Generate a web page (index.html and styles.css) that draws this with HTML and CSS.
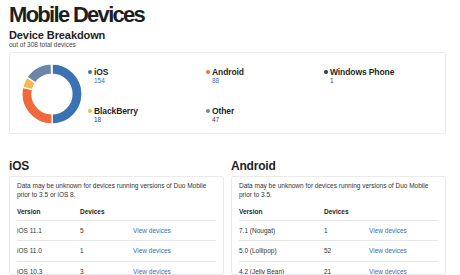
FILE: index.html
```html
<!DOCTYPE html>
<html lang="en">
<head>
    <meta charset="UTF-8">
    <title>Mobile Devices</title>
    <link rel="stylesheet" href="styles.css">
</head>
<body>

    <h1 class="page-title">Mobile Devices</h1>
    <h2 class="section-title">Device Breakdown</h2>
    <p class="subtitle">out of 308 total devices</p>

    <div class="card breakdown">
        <svg class="donut" width="62" height="62" viewBox="0 0 62 62">
            <path class="seg-ios" d="M31 1 A30 30 0 0 1 31 61 L31 51 A20 20 0 0 0 31 11 Z"/>
            <path class="seg-android" d="M31 61 A30 30 0 0 1 1.75 24.32 L11.5 26.55 A20 20 0 0 0 31 51 Z"/>
            <path class="seg-blackberry" d="M1.75 24.32 A30 30 0 0 1 6.1 14.27 L14.4 19.85 A20 20 0 0 0 11.5 26.55 Z"/>
            <path class="seg-other" d="M6.1 14.27 A30 30 0 0 1 30.39 1.01 L30.59 11 A20 20 0 0 0 14.4 19.85 Z"/>
            <path class="seg-windows" d="M30.39 1.01 A30 30 0 0 1 31 1 L31 11 A20 20 0 0 0 30.59 11 Z"/>
        </svg>

        <ul class="legend">
            <li class="legend-item">
                <span class="dot dot-ios"></span>
                <div class="legend-text">
                    <strong>iOS</strong>
                    <span class="count count-link">154</span>
                </div>
            </li>
            <li class="legend-item">
                <span class="dot dot-android"></span>
                <div class="legend-text">
                    <strong>Android</strong>
                    <span class="count count-link">88</span>
                </div>
            </li>
            <li class="legend-item">
                <span class="dot dot-windows"></span>
                <div class="legend-text">
                    <strong>Windows Phone</strong>
                    <span class="count">1</span>
                </div>
            </li>
            <li class="legend-item">
                <span class="dot dot-blackberry"></span>
                <div class="legend-text">
                    <strong>BlackBerry</strong>
                    <span class="count">18</span>
                </div>
            </li>
            <li class="legend-item">
                <span class="dot dot-other"></span>
                <div class="legend-text">
                    <strong>Other</strong>
                    <span class="count">47</span>
                </div>
            </li>
        </ul>
    </div>

    <div class="platforms">
        <section class="platform">
            <h2 class="platform-title">iOS</h2>
            <div class="card platform-card">
                <p class="note">Data may be unknown for devices running versions of Duo Mobile prior to 3.5 or iOS 8.</p>
                <table class="versions versions-ios">
                    <colgroup>
                        <col class="col-version">
                        <col class="col-devices">
                        <col>
                    </colgroup>
                    <thead>
                        <tr><th>Version</th><th>Devices</th><th></th></tr>
                    </thead>
                    <tbody>
                        <tr><td>iOS 11.1</td><td>5</td><td><a href="#">View devices</a></td></tr>
                        <tr><td>iOS 11.0</td><td>1</td><td><a href="#">View devices</a></td></tr>
                        <tr><td>iOS 10.3</td><td>3</td><td><a href="#">View devices</a></td></tr>
                    </tbody>
                </table>
            </div>
        </section>

        <section class="platform">
            <h2 class="platform-title">Android</h2>
            <div class="card platform-card">
                <p class="note">Data may be unknown for devices running versions of Duo Mobile prior to 3.5.</p>
                <table class="versions versions-android">
                    <colgroup>
                        <col class="col-version">
                        <col class="col-devices">
                        <col>
                    </colgroup>
                    <thead>
                        <tr><th>Version</th><th>Devices</th><th></th></tr>
                    </thead>
                    <tbody>
                        <tr><td>7.1 (Nougat)</td><td>1</td><td><a href="#">View devices</a></td></tr>
                        <tr><td>5.0 (Lollipop)</td><td>52</td><td><a href="#">View devices</a></td></tr>
                        <tr><td>4.2 (Jelly Bean)</td><td>21</td><td><a href="#">View devices</a></td></tr>
                    </tbody>
                </table>
            </div>
        </section>
    </div>

</body>
</html>
```

FILE: styles.css
```css
/* --- Base --- */
:root {
    --text: #1f1f1f;
    --muted: #444;
    --border: #ebebeb;
    --line: #e6e6e6;
    --link: #3b6db3;
    --ios: #3b72b4;
    --android: #f0693a;
    --blackberry: #f6b84b;
    --other: #6b86a6;
    --windows: #22395a;
}

* {
    margin: 0;
    padding: 0;
    box-sizing: border-box;
}

body {
    font-family: "Liberation Sans", Arial, sans-serif;
    color: var(--text);
    background: #fff;
    padding: 3px 14px 0 9px;
    overflow: hidden;
}

.page-title {
    font-size: 22px;
    line-height: 24px;
    font-weight: 700;
    letter-spacing: -1.7px;
}

.section-title {
    font-size: 11px;
    line-height: 12px;
    font-weight: 700;
    margin-top: 2px;
    letter-spacing: -0.1px;
}

.subtitle {
    font-size: 6.5px;
    line-height: 7px;
    color: var(--muted);
}

.card {
    border: 1px solid var(--border);
    border-radius: 2px;
    background: #fff;
}

/* --- Breakdown card --- */
.breakdown {
    margin-top: 4px;
    display: flex;
    align-items: center;
    padding: 10px 11px 8px;
}

.donut {
    flex-shrink: 0;
}

.donut path {
    stroke: #fff;
    stroke-width: 1.2;
}

.seg-ios { fill: var(--ios); }
.seg-android { fill: var(--android); }
.seg-blackberry { fill: var(--blackberry); }
.seg-other { fill: var(--other); }
.seg-windows { fill: var(--windows); }

.legend {
    list-style: none;
    flex: 1;
    display: grid;
    grid-template-columns: 118px 118px 1fr;
    row-gap: 21px;
    margin-left: 5px;
    margin-top: 2px;
}

.legend-item {
    display: flex;
    align-items: flex-start;
}

.dot {
    width: 4px;
    height: 4px;
    border-radius: 50%;
    margin: 3.5px 2px 0 0;
    flex-shrink: 0;
}

.dot-ios { background: var(--ios); }
.dot-android { background: var(--android); }
.dot-blackberry { background: var(--blackberry); }
.dot-other { background: var(--other); }
.dot-windows { background: var(--windows); }

.legend-text strong {
    display: block;
    font-size: 8.5px;
    line-height: 10px;
    letter-spacing: -0.1px;
}

.count {
    display: block;
    font-size: 6.5px;
    line-height: 8px;
    color: var(--muted);
}

.count-link {
    color: var(--link);
}

/* --- Platform cards --- */
.platforms {
    display: grid;
    grid-template-columns: 1fr 1fr;
    column-gap: 7px;
    margin-top: 25px;
}

.platform-title {
    font-size: 12px;
    line-height: 14px;
    font-weight: 700;
    letter-spacing: -0.2px;
    margin-bottom: 3px;
}

.platform-card {
    padding: 4px 7px 0;
    height: 99px;
    overflow: hidden;
}

.note {
    font-size: 6.5px;
    line-height: 9px;
    color: #333;
    margin-bottom: 5px;
}

.versions {
    width: 100%;
    border-collapse: collapse;
    font-size: 6.5px;
    table-layout: fixed;
}

.versions th {
    text-align: left;
    font-weight: 700;
    height: 16px;
    vertical-align: middle;
    border-bottom: 1px solid var(--line);
}

.versions td {
    height: 20.5px;
    vertical-align: middle;
    border-bottom: 1px solid var(--line);
    color: #333;
}

.versions a {
    color: var(--link);
    text-decoration: none;
}

.versions-ios .col-version { width: 63px; }
.versions-ios .col-devices { width: 53px; }
.versions-android .col-version { width: 85px; }
.versions-android .col-devices { width: 45px; }
```
